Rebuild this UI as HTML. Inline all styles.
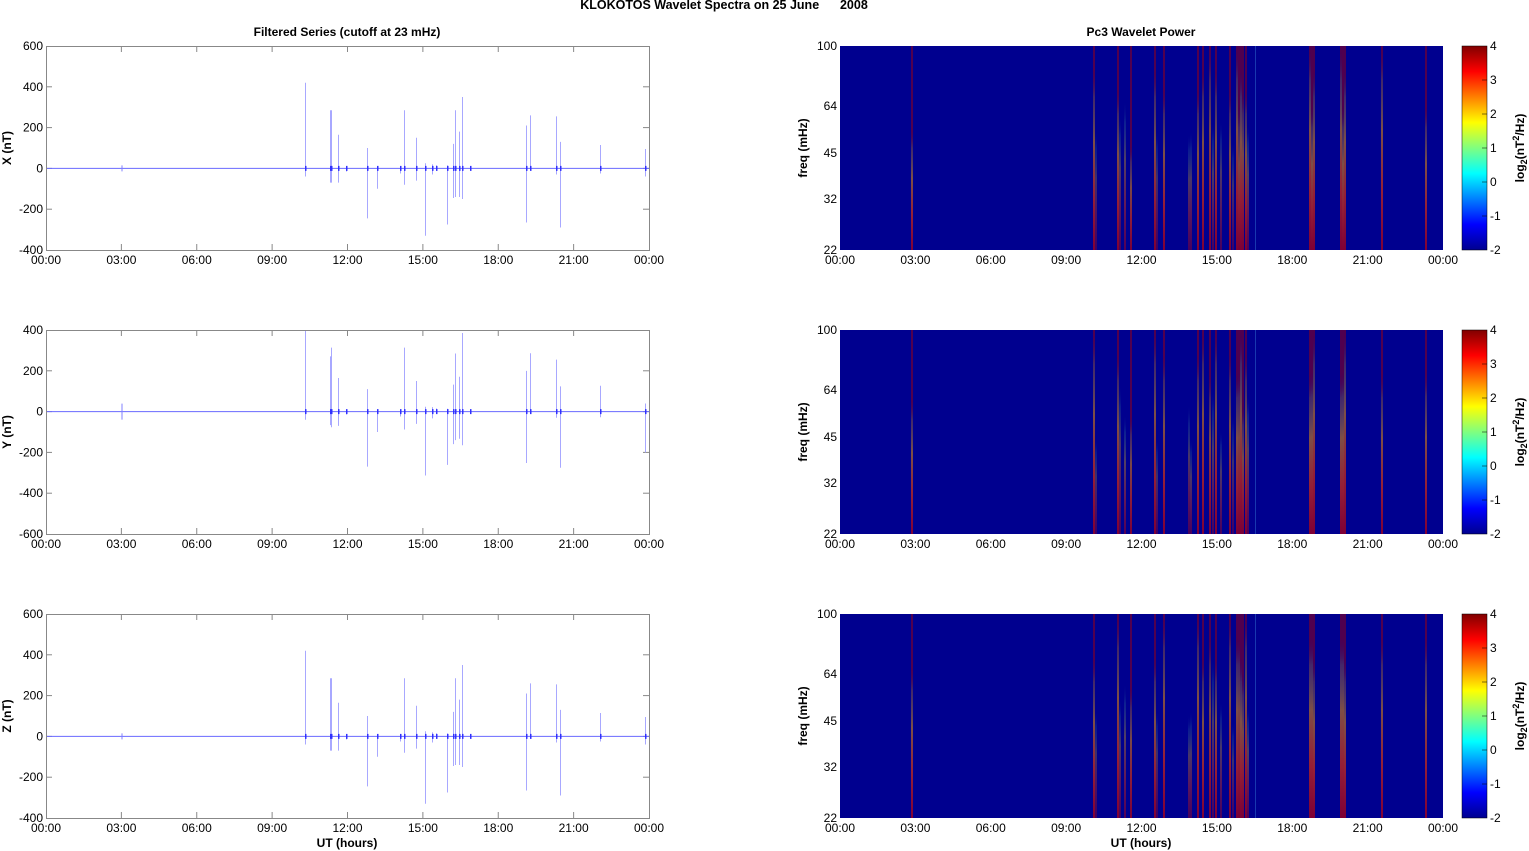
<!DOCTYPE html>
<html><head><meta charset="utf-8"><style>
html,body{margin:0;padding:0;background:#fff;width:1529px;height:851px;overflow:hidden}
svg{display:block;font-family:"Liberation Sans",Arial,sans-serif}
</style></head><body>
<svg id="s" width="1529" height="851" xmlns="http://www.w3.org/2000/svg">
<defs>
<linearGradient id="jet" x1="0" y1="1" x2="0" y2="0">
<stop offset="0" stop-color="#00008f"/><stop offset="0.125" stop-color="#0000ff"/>
<stop offset="0.375" stop-color="#00ffff"/><stop offset="0.625" stop-color="#ffff00"/>
<stop offset="0.875" stop-color="#ff0000"/><stop offset="1" stop-color="#800000"/>
</linearGradient>
<linearGradient id="hot" x1="0" y1="1" x2="0" y2="0">
<stop offset="0" stop-color="#d00000"/><stop offset="0.3" stop-color="#ff4000"/>
<stop offset="0.6" stop-color="#d0a020"/><stop offset="0.85" stop-color="#40a0a0" stop-opacity="0.5"/>
<stop offset="1" stop-color="#00008f" stop-opacity="0"/>
</linearGradient>
<clipPath id="c0"><rect x="840" y="46" width="603" height="204"/></clipPath>
<clipPath id="c1"><rect x="840" y="330" width="603" height="204"/></clipPath>
<clipPath id="c2"><rect x="840" y="614" width="603" height="204"/></clipPath>
</defs>
<text x="724" y="9" font-size="12.5" font-weight="bold" text-anchor="middle" xml:space="preserve">KLOKOTOS Wavelet Spectra on 25 June      2008</text>
<text x="347" y="36" font-size="12" font-weight="bold" text-anchor="middle">Filtered Series (cutoff at 23 mHz)</text>
<text x="1141" y="36" font-size="12" font-weight="bold" text-anchor="middle">Pc3 Wavelet Power</text>
<text x="347" y="847" font-size="12" font-weight="bold" text-anchor="middle">UT (hours)</text>
<text x="1141" y="847" font-size="12" font-weight="bold" text-anchor="middle">UT (hours)</text>
<g id="g"></g>
</svg>
<script>
var g=document.getElementById('g'),h='';
var tops=[46,330,614],H=204;
var times=['00:00','03:00','06:00','09:00','12:00','15:00','18:00','21:00','00:00'];
var names=['X (nT)','Y (nT)','Z (nT)'];
var yr=[[600,-400],[400,-600],[600,-400]];
var sp=[[305,420,-40],[330,285,-70],[331,285,-70],[338,165,-70],[346,10,-15],[367,100,-245],[377,5,-100],[400,5,-25],[404,285,-80],[416,150,-60],[425,25,-330],[432,20,-30],[436,15,-10],[447,15,-275],[453,120,-145],[455,285,-140],[459,180,-140],[462,350,-150],[470,10,-10],[526,210,-265],[530,260,-10],[556,255,-30],[560,130,-290],[600,115,-25],[645,95,-40]];
for(var p=0;p<3;p++){
 var T=tops[p],B=T+H;
 h+='<rect x="46.5" y="'+(T+.5)+'" width="603" height="'+H+'" fill="#fff" stroke="#888" stroke-width="1"/>';
 var y0=yr[p][0],y1=yr[p][1],sc=H/(y0-y1),z=T+y0*sc;
 for(var v=y0;v>=y1;v-=200){var yy=T+(y0-v)*sc;h+='<text x="43" y="'+(yy+4)+'" font-size="12" text-anchor="end">'+v+'</text>';
  if(v<y0&&v>y1)h+='<line x1="46" x2="52" y1="'+yy+'" y2="'+yy+'" stroke="#888"/><line x1="643" x2="649" y1="'+yy+'" y2="'+yy+'" stroke="#888"/>';}
 h+='<text transform="translate(11,'+(T+102)+') rotate(-90)" font-size="12" font-weight="bold" text-anchor="middle">'+names[p]+'</text>';
 for(var i=0;i<9;i++){var x=46+i*75.375;h+='<text x="'+x+'" y="'+(B+14)+'" font-size="12" text-anchor="middle">'+times[i]+'</text>';
  if(i>0&&i<8)h+='<line x1="'+x+'" x2="'+x+'" y1="'+T+'" y2="'+(T+6)+'" stroke="#888"/><line x1="'+x+'" x2="'+x+'" y1="'+(B-6)+'" y2="'+B+'" stroke="#888"/>';}
 h+='<line x1="47" x2="649" y1="'+z+'" y2="'+z+'" stroke="#6a6aff" stroke-width="1"/>';
 h+='<line x1="122" x2="122" y1="'+(z-(p==1?8:3))+'" y2="'+(z+(p==1?8:3))+'" stroke="#8080ff"/>';
 for(var k=0;k<sp.length;k++){var s=sp[k],f=(p==1?[1,0.95,1.1][k%3]:1),up=s[1]*f,dn=s[2]*f;
  if(p==1&&k==24){up=40;dn=-200;}
  var a=Math.max(T+1,z-up*sc),b=Math.min(B,z-dn*sc);
  h+='<line x1="'+(s[0]+.5)+'" x2="'+(s[0]+.5)+'" y1="'+a+'" y2="'+b+'" stroke="#a8a8ff" stroke-width="1"/>';
  h+='<rect x="'+(s[0])+'" y="'+(z-2.5)+'" width="1.5" height="5" fill="#3030ff"/>';}
 h+='<rect x="840" y="'+T+'" width="603" height="'+H+'" fill="#00008f"/>';
 h+='<g clip-path="url(#c'+p+')">';
 var L=[[912,1,150],[1094,1,200],[1096,.6,120],[1118,1,200],[1120,.7,150],[1125,.8,150],[1131,.9,130],[1155,1,200],[1157,.6,120],[1164,1,200],[1189,.7,130],[1191,.7,120],[1198,1,200],[1203,1,200],[1210,.9,200],[1213,.7,160],[1216,1,200],[1221,.7,130],[1230,1,200],[1233,.6,120],[1237,1,200],[1239,.9,180],[1241,1,200],[1243,.9,160],[1246,1,200],[1248,.8,140],[1310,1,200],[1312,1,180],[1314,1,200],[1341,1,200],[1343,1,180],[1345,1,200],[1382,1,200],[1426,1,180]];
 for(var k=0;k<L.length;k++){var l=L[k],hh=Math.min(H,l[2]*(0.8+0.1*((k+p)%3)));
  if(l[1]>=0.9)h+='<rect x="'+(l[0]-0.5)+'" y="'+T+'" width="1" height="'+H+'" fill="#b00000" opacity="0.9"/>';
  h+='<rect x="'+(l[0]-0.7)+'" y="'+(B-hh)+'" width="1.4" height="'+hh+'" fill="url(#hot)" opacity="'+(0.7*l[1])+'"/>';}
 h+='<rect x="1255" y="'+T+'" width="1" height="'+H+'" fill="#3070d0" opacity="0.5"/>';
 h+='</g>';
 var fr=[[100,T],[64,T+60],[45,T+107],[32,T+153],[22,B]];
 for(var i=0;i<5;i++){h+='<text x="837" y="'+(fr[i][1]+4)+'" font-size="12" text-anchor="end">'+fr[i][0]+'</text>';}
 h+='<text transform="translate(807,'+(T+102)+') rotate(-90)" font-size="12" font-weight="bold" text-anchor="middle">freq (mHz)</text>';
 for(var i=0;i<9;i++){var x=840+i*75.375;h+='<text x="'+x+'" y="'+(B+14)+'" font-size="12" text-anchor="middle">'+times[i]+'</text>';}
 h+='<rect x="1462" y="'+T+'" width="25" height="'+H+'" fill="url(#jet)" stroke="#000" stroke-width="0.5"/>';
 for(var v=4;v>=-2;v--){var yy=T+(4-v)*34;h+='<text x="1490" y="'+(yy+4)+'" font-size="12">'+v+'</text>';
  if(v<4&&v>-2)h+='<line x1="1482" x2="1487" y1="'+yy+'" y2="'+yy+'" stroke="#000" stroke-opacity=".5"/>';}
 h+='<text transform="translate(1524,'+(T+102)+') rotate(-90)" font-size="12" font-weight="bold" text-anchor="middle">log<tspan font-size="9" dy="3">2</tspan><tspan dy="-3">(nT</tspan><tspan font-size="9" dy="-5">2</tspan><tspan dy="5">/Hz)</tspan></text>';
}
g.innerHTML=h;
</script>
</body></html>
